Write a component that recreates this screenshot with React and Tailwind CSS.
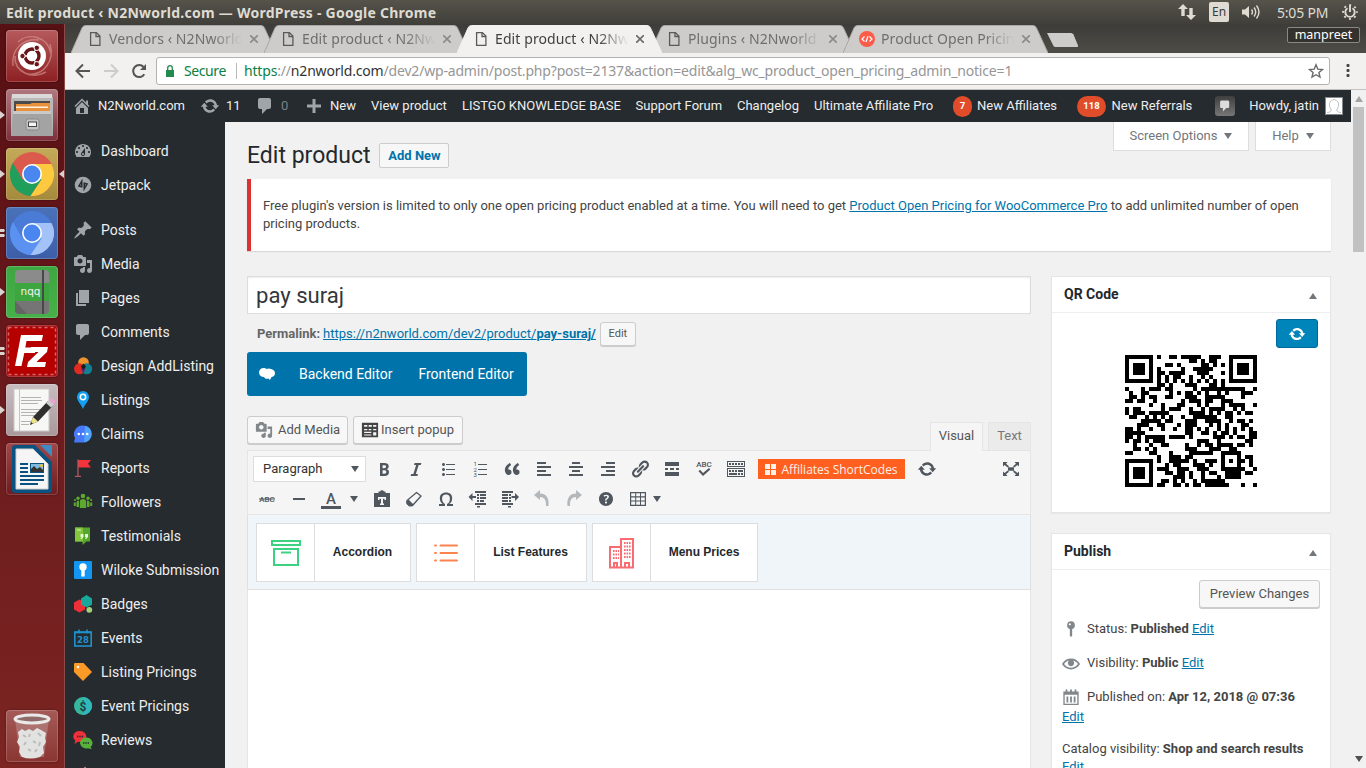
import React from "react";

/* ---------- QR code (version 4, 33 x 33 modules) ---------- */
function makeQr(text, { ecBits, mask, perBlock, blocks, ecLen }) {
  const n = 33;
  const exp = [];
  const log = [];
  for (let i = 0, x = 1; i < 255; i++) {
    exp[i] = x;
    log[x] = i;
    x <<= 1;
    if (x & 256) x ^= 0x11d;
  }
  const mul = (a, b) => (a && b ? exp[(log[a] + log[b]) % 255] : 0);
  const bits = [];
  const put = (v, len) => {
    for (let i = len - 1; i >= 0; i--) bits.push((v >> i) & 1);
  };
  put(4, 4);
  put(text.length, 8);
  for (const c of text) put(c.charCodeAt(0), 8);
  const cap = perBlock * blocks * 8;
  put(0, Math.min(4, cap - bits.length));
  while (bits.length % 8) bits.push(0);
  for (let p = 0; bits.length < cap; p++) put(p % 2 ? 0x11 : 0xec, 8);
  const bytes = [];
  for (let i = 0; i < bits.length; i += 8) bytes.push(parseInt(bits.slice(i, i + 8).join(""), 2));
  let gen = [1];
  for (let i = 0; i < ecLen; i++) {
    const next = new Array(gen.length + 1).fill(0);
    gen.forEach((g, j) => {
      next[j] ^= g;
      next[j + 1] ^= mul(g, exp[i]);
    });
    gen = next;
  }
  const data = [];
  const ecc = [];
  for (let b = 0; b < blocks; b++) {
    const d = bytes.slice(b * perBlock, (b + 1) * perBlock);
    const r = d.concat(new Array(ecLen).fill(0));
    for (let i = 0; i < d.length; i++) {
      const k = r[i];
      gen.forEach((g, j) => {
        r[i + j] ^= mul(g, k);
      });
    }
    data.push(d);
    ecc.push(r.slice(d.length));
  }
  const out = [];
  for (let i = 0; i < perBlock; i++) data.forEach((d) => out.push(d[i]));
  for (let i = 0; i < ecLen; i++) ecc.forEach((d) => out.push(d[i]));
  const m = Array.from({ length: n }, () => new Array(n).fill(null));
  const finder = (r, c) => {
    for (let y = -1; y < 8; y++)
      for (let x = -1; x < 8; x++) {
        if (!m[r + y] || m[r + y][c + x] === undefined) continue;
        const d = Math.max(Math.abs(y - 3), Math.abs(x - 3));
        m[r + y][c + x] = d !== 2 && d !== 4 ? 1 : 0;
      }
  };
  finder(0, 0);
  finder(0, n - 7);
  finder(n - 7, 0);
  for (let y = -2; y <= 2; y++)
    for (let x = -2; x <= 2; x++) m[26 + y][26 + x] = Math.max(Math.abs(y), Math.abs(x)) !== 1 ? 1 : 0;
  for (let i = 8; i < n - 8; i++) m[6][i] = m[i][6] = i % 2 ? 0 : 1;
  const fd = (ecBits << 3) | mask;
  let rem = fd;
  for (let i = 0; i < 10; i++) rem = (rem << 1) ^ ((rem >> 9) * 0x537);
  const f = ((fd << 10) | rem) ^ 0x5412;
  const g = (i) => (f >> i) & 1;
  for (let i = 0; i < 6; i++) m[i][8] = g(i);
  m[7][8] = g(6);
  m[8][8] = g(7);
  m[8][7] = g(8);
  for (let i = 9; i < 15; i++) m[8][14 - i] = g(i);
  for (let i = 0; i < 8; i++) m[8][n - 1 - i] = g(i);
  for (let i = 8; i < 15; i++) m[n - 15 + i][8] = g(i);
  m[n - 8][8] = 1;
  const masks = [
    (r, c) => (r + c) % 2,
    (r) => r % 2,
    (r, c) => c % 3,
    (r, c) => (r + c) % 3,
    (r, c) => (Math.floor(r / 2) + Math.floor(c / 3)) % 2,
    (r, c) => ((r * c) % 2) + ((r * c) % 3),
    (r, c) => (((r * c) % 2) + ((r * c) % 3)) % 2,
    (r, c) => (((r + c) % 2) + ((r * c) % 3)) % 2,
  ];
  let k = 0;
  for (let right = n - 1; right >= 1; right -= 2) {
    if (right === 6) right = 5;
    for (let v = 0; v < n; v++)
      for (let j = 0; j < 2; j++) {
        const x = right - j;
        const y = ((right + 1) & 2) === 0 ? n - 1 - v : v;
        if (m[y][x] === null) {
          const bit = k < out.length * 8 ? (out[k >> 3] >> (7 - (k & 7))) & 1 : 0;
          k++;
          m[y][x] = bit ^ (masks[mask](y, x) === 0 ? 1 : 0);
        }
      }
  }
  return m;
}

function QrCode() {
  const m = makeQr("https://n2nworld.com/dev2/product/pay-suraj/", {
    ecBits: 0,
    mask: 4,
    perBlock: 32,
    blocks: 2,
    ecLen: 18,
  });
  const d = m.map((row, y) => row.map((v, x) => (v ? `M${x} ${y}h1v1h-1z` : "")).join("")).join("");
  return (
    <svg viewBox="0 0 33 33" className="h-[132px] w-[132px]" shapeRendering="crispEdges">
      <path d={d} fill="#000" />
    </svg>
  );
}

/* ---------- icon glyphs on a 20 x 20 grid ---------- */
const P = {
  home: "M16 8.5l1.53 1.53-1.06 1.06L10 4.6l-6.47 6.49-1.06-1.06L10 2.5l4 4v-2h2v4zm-6-2.46l6 5.99V18H4v-5.97zM12 17v-5H8v5h4z",
  update:
    "M10.2 3.28c3.53 0 6.43 2.61 6.92 6h2.08l-3.5 4-3.5-4h2.32c-.45-1.97-2.21-3.45-4.32-3.45-1.45 0-2.73.71-3.54 1.78L4.95 5.66C6.23 4.2 8.11 3.28 10.2 3.28zm-.4 13.44c-3.52 0-6.43-2.61-6.92-6H.8l3.5-4c1.17 1.33 2.33 2.67 3.5 4H5.48c.45 1.97 2.21 3.45 4.32 3.45 1.45 0 2.73-.71 3.54-1.78l1.71 1.95c-1.28 1.46-3.15 2.38-5.25 2.38z",
  comment: "M5 2h9c1.1 0 2 .9 2 2v7c0 1.1-.9 2-2 2h-2l-5 5v-5H5c-1.1 0-2-.9-2-2V4c0-1.1.9-2 2-2z",
  plus: "M17 8.5v3h-5.500v5.500h-3v-5.500H3v-3h5.500V3h3v5.500z",
  dashboard:
    "M3.76 16h12.48c1.1-1.37 1.76-3.11 1.76-5 0-4.42-3.58-8-8-8s-8 3.58-8 8c0 1.89.66 3.63 1.76 5zM10 4c.55 0 1 .45 1 1s-.45 1-1 1-1-.45-1-1 .45-1 1-1zM6 6c.55 0 1 .45 1 1s-.45 1-1 1-1-.45-1-1 .45-1 1-1zm8 0c.55 0 1 .45 1 1s-.45 1-1 1-1-.45-1-1 .45-1 1-1zm-5.37 5.55L12 7v6c0 1.1-.9 2-2 2s-2-.9-2-2c0-.57.24-1.08.63-1.45zM4 10c.55 0 1 .45 1 1s-.45 1-1 1-1-.45-1-1 .45-1 1-1zm12 0c.55 0 1 .45 1 1s-.45 1-1 1-1-.45-1-1 .45-1 1-1zm-5 3c0-.55-.45-1-1-1s-1 .45-1 1 .45 1 1 1 1-.45 1-1z",
  post: "M10.44 3.02l1.82-1.82 6.36 6.35-1.83 1.82c-1.05-.68-2.48-.57-3.41.36l-.75.75c-.92.93-1.04 2.35-.35 3.41l-1.83 1.82-2.41-2.41-2.8 2.79c-.42.42-3.38 2.71-3.8 2.29s1.86-3.39 2.28-3.81l2.79-2.79L4.1 9.36l1.83-1.82c1.05.69 2.48.57 3.4-.36l.75-.75c.93-.92 1.05-2.35.36-3.41z",
  media:
    "M13 11V4c0-.55-.45-1-1-1h-1.670L9 1H5L3.670 3H2c-.55 0-1 .45-1 1v7c0 .55.45 1 1 1h10c.55 0 1-.45 1-1zM7 4.500c1.380 0 2.500 1.120 2.500 2.500S8.380 9.500 7 9.500 4.500 8.380 4.500 7 5.620 4.500 7 4.500zM14 6h5v10.500c0 1.380-1.120 2.500-2.500 2.500S14 17.880 14 16.500s1.120-2.500 2.500-2.500c.17 0 .34.02.5.05V9h-3V6zm-4 8.050V13h2v3.500c0 1.380-1.120 2.500-2.500 2.500S7 17.880 7 16.500 8.120 14 9.500 14c.17 0 .34.02.5.05z",
  page: "M6 15V2h10v13H6zm-1 1h8v2H3V5h2v11z",
  bold: "M6 4v13h4.540c1.370 0 2.460-.33 3.260-1 .8-.66 1.200-1.580 1.200-2.770 0-.84-.17-1.510-.51-2.010s-.9-.85-1.670-1.030v-.09c.57-.1 1.020-.4 1.360-.9s.51-1.130.51-1.910c0-1.140-.39-1.980-1.170-2.500C12.750 4.260 11.500 4 9.780 4H6zm2.570 5.150V6.260h1.360c.73 0 1.270.11 1.610.32.34.22.51.58.51 1.070 0 .54-.16.92-.47 1.150s-.82.35-1.510.35h-1.500zm0 2.190h1.600c1.440 0 2.160.53 2.160 1.610 0 .6-.17 1.050-.51 1.340s-.86.43-1.570.43H8.570v-3.380z",
  italic: "M14.78 6h-2.13l-2.8 9h2.12l-.62 2H4.6l.62-2h2.14l2.8-9H8.03l.62-2h6.75z",
  ul: "M5.500 7C4.670 7 4 6.330 4 5.500 4 4.680 4.670 4 5.500 4 6.320 4 7 4.680 7 5.500 7 6.330 6.320 7 5.500 7zM8 5h9v1H8V5zm-2.500 7c-.83 0-1.500-.67-1.500-1.500C4 9.680 4.670 9 5.500 9c.82 0 1.500.68 1.500 1.500 0 .83-.68 1.500-1.500 1.500zM8 10h9v1H8v-1zm-2.500 7c-.83 0-1.500-.67-1.500-1.500 0-.82.67-1.500 1.500-1.500.82 0 1.500.68 1.500 1.500 0 .83-.68 1.500-1.500 1.500zM8 15h9v1H8v-1z",
  quote:
    "M9.49 13.22c0-.74-.2-1.38-.61-1.9-.62-.78-1.83-.88-2.53-.72-.29-1.65 1.11-3.75 2.92-4.65L7.88 4c-2.73 1.3-5.42 4.28-4.96 8.05C3.21 14.43 4.59 16 6.54 16c.85 0 1.56-.25 2.12-.75s.83-1.18.83-2.03zm8.05 0c0-.74-.2-1.38-.61-1.9-.63-.78-1.83-.88-2.53-.72-.29-1.65 1.11-3.75 2.92-4.65L15.93 4c-2.73 1.3-5.41 4.28-4.95 8.05.29 2.38 1.66 3.95 3.61 3.95.85 0 1.56-.25 2.12-.75s.83-1.18.83-2.03z",
  left: "M12 5V3H3v2h9zm5 4V7H3v2h14zm-5 4v-2H3v2h9zm5 4v-2H3v2h14z",
  center: "M14 5V3H6v2h8zm3 4V7H3v2h14zm-3 4v-2H6v2h8zm3 4v-2H3v2h14z",
  right: "M17 5V3H8v2h9zm0 4V7H3v2h14zm0 4v-2H8v2h9zm0 4v-2H3v2h14z",
  link: "M17.74 2.76c1.68 1.69 1.68 4.41 0 6.1l-1.53 1.52c-1.12 1.12-2.7 1.47-4.14 1.09l2.62-2.61.76-.77.76-.76c.84-.84.84-2.2 0-3.04-.84-.85-2.2-.85-3.04 0l-.77.76-3.38 3.38c-.37-1.44-.02-3.02 1.1-4.14l1.52-1.53c1.69-1.68 4.42-1.68 6.1 0zM8.59 13.43l5.34-5.34c.42-.42.42-1.1 0-1.52-.44-.43-1.13-.39-1.53 0l-5.33 5.34c-.42.42-.42 1.1 0 1.52.44.43 1.13.39 1.52 0zm-.76 2.29l4.14-4.15c.38 1.44.03 3.02-1.09 4.14l-1.52 1.53c-1.69 1.68-4.41 1.68-6.1 0-1.68-1.68-1.68-4.42 0-6.1l1.53-1.52c1.12-1.12 2.7-1.47 4.14-1.1l-4.14 4.15c-.85.84-.85 2.2 0 3.05.84.84 2.2.84 3.04 0z",
  more: "M17 7V3H3v4h14zM6 11V9H3v2h3zm6 0V9H8v2h4zm5 0V9h-3v2h3zm0 6v-4H3v4h14z",
  sink: "M19 2v6H1V2h18zm-1 5V3H2v4h16zM5 4v2H3V4h2zm3 0v2H6V4h2zm3 0v2H9V4h2zm3 0v2h-2V4h2zm3 0v2h-2V4h2zm2 5v9H1V9h18zm-1 8v-7H2v7h16zM5 11v2H3v-2h2zm3 0v2H6v-2h2zm3 0v2H9v-2h2zm6 0v2h-5v-2h5zm-6 3v2H3v-2h8zm3 0v2h-2v-2h2zm3 0v2h-2v-2h2z",
  full: "M2 3h4.500L5 4.700l3 2.500-1.300 1.300-3.100-2.600L2 7.500zM18 3v4.500l-1.600-1.600-3.100 2.600L12 7.200l3-2.500L13.500 3zM2 17v-4.500l1.600 1.600 3.100-2.600L8 12.800l-3 2.500L6.500 17zM18 17h-4.500l1.500-1.700-3-2.500 1.300-1.300 3.100 2.600 1.600-1.600zM7 8.200h6v3.600H7z",
  omega:
    "M10 5.4c1.27 0 2.24.36 2.91 1.08.66.71 1 1.76 1 3.13 0 1.28-.23 2.37-.69 3.27-.47.89-1.27 1.52-2.22 2.12v2h6v-2h-3.69c.92-.64 1.62-1.34 2.12-2.34.49-1.01.74-2.13.74-3.35 0-1.78-.55-3.19-1.65-4.22S11.92 3.54 10 3.54s-3.43.53-4.52 1.57c-1.1 1.04-1.65 2.44-1.65 4.2 0 1.21.24 2.31.73 3.33.48 1.01 1.19 1.71 2.1 2.36H3v2h6v-2c-.98-.64-1.8-1.28-2.24-2.17-.45-.89-.67-1.96-.67-3.22 0-1.37.33-2.41 1-3.13C7.75 5.76 8.72 5.4 10 5.4z",
  help: "M17 10c0-3.870-3.140-7-7-7-3.870 0-7 3.130-7 7s3.130 7 7 7c3.860 0 7-3.130 7-7zm-6.300 1.480H9.140v-.43c0-.38.08-.7.24-.98s.46-.57.88-.89c.41-.29.68-.53.81-.71.14-.18.2-.39.2-.62 0-.25-.09-.44-.28-.58-.19-.13-.45-.19-.79-.19-.58 0-1.250.19-2 .57l-.64-1.280c.87-.49 1.800-.74 2.770-.74.81 0 1.450.2 1.920.58.48.39.71.91.71 1.550 0 .43-.09.8-.29 1.110-.19.32-.57.67-1.110 1.060-.38.28-.61.49-.71.63-.1.15-.15.34-.15.57v.35zm-1.470 2.740c-.18-.17-.27-.42-.27-.73 0-.33.08-.58.26-.75s.43-.25.77-.25c.32 0 .57.09.75.26s.27.42.27.74c0 .3-.09.55-.27.72-.18.18-.43.27-.75.27-.33 0-.58-.09-.76-.26z",
  indentOut:
    "M7 2h11v2H7zM9 5h2v2H9zM12 5h6v2h-6zM9 8h2v2H9zM12 8h6v2h-6zM9 11h2v2H9zM12 11h4v2h-4zM7 14h11v2H7zM9 17h3v1.500H9zM.5 8l4-4v3H8v2H4.500v3z",
  indentIn:
    "M2 2h11v2H2zM2 5h6v2H2zM9 5h2v2H9zM2 8h6v2H2zM9 8h2v2H9zM2 11h6v2H2zM9 11h2v2H9zM2 14h11v2H2zM8 17h3v1.500H8zM19 8l-4-4v3h-3.500v2H15v3z",
  table: "M2 3h16v14H2zM3.200 4.200v3h4v-3zM8.200 4.200v3h3.800v-3zM13 4.200v3h3.800v-3zM3.200 8.400v3h4v-3zM8.200 8.400v3h3.800v-3zM13 8.400v3h3.800v-3zM3.200 12.600v3.200h4v-3.200zM8.200 12.600v3.200h3.800v-3.200zM13 12.600v3.200h3.800v-3.200z",
  popup:
    "M1 2h18v16H1zM3.500 4.500v1.800h3.500V4.500zM8.500 4.500v1.800H12V4.500zM13.500 4.500v1.800H17V4.500zM3.500 9v1.200H7V9zM8.500 9v1.200h3V9zM3.500 12v1.200h8V12zM3.500 15v1.200h8V15zM13.500 9v1.200H17V9zM13.500 12.500v3.500H17v-3.500z",
  eye: "M19.700 9.400C17.700 6 14 3.900 10 3.900S2.300 6 .3 9.400L0 10l.3.6c2 3.400 5.700 5.500 9.700 5.500s7.700-2.100 9.700-5.500l.3-.6-.3-.6zM10 14.100c-3.100 0-6-1.600-7.700-4.100C3.600 8 5.700 6.600 8 6.100c-.9.6-1.500 1.700-1.500 2.900 0 1.900 1.600 3.500 3.500 3.500s3.500-1.600 3.500-3.500c0-1.200-.6-2.300-1.500-2.900 2.300.5 4.400 1.900 5.700 3.900-1.700 2.500-4.600 4.100-7.700 4.100z",
  pin: "M10 1.500a4.300 4.300 0 0 1 1.300 8.400V17.500L10 19l-1.300-1.500V9.900A4.300 4.300 0 0 1 10 1.500zM8.700 3.500a1.200 1.200 0 1 0 .01 0z",
  calendar:
    "M1.500 4H4V2.500a1 1 0 0 1 2 0V4h3V2.500a1 1 0 0 1 2 0V4h3V2.500a1 1 0 0 1 2 0V4h2.500v15h-17zM3 7.500v10h14v-10zM5 9.500h2v6.500H5zM9 9.500h2v6.500H9zM13 9.500h2v6.500h-2z",
};

function Dash({ d, className = "h-5 w-5", children }) {
  return (
    <svg viewBox="0 0 20 20" className={`shrink-0 ${className}`} fill="currentColor" fillRule="evenodd">
      {d ? <path d={d} /> : children}
    </svg>
  );
}

const Caret = ({ up, className = "" }) => (
  <svg viewBox="0 0 8 6" className={`h-1.5 w-2 shrink-0 ${className}`} fill="currentColor">
    <path d={up ? "M0 6L4 0L8 6z" : "M0 0h8L4 6z"} />
  </svg>
);

/* ---------- desktop panel ---------- */
function TopPanel() {
  return (
    <header className="flex h-6 items-center bg-linear-to-b from-[#55534a] to-[#403f3a] pl-1.5 pr-2 font-['Noto_Sans',sans-serif] text-[#dfdbd2]">
      <span className="whitespace-nowrap text-[14px] font-bold tracking-[0.25px]">Edit product ‹ N2Nworld.com — WordPress - Google Chrome</span>
      <svg viewBox="0 0 18 16" className="ml-auto h-4 w-[18px]" fill="currentColor">
        <path d="M5 0L0 5h3.300v7h3.400V5H10zM13 16l-5-5h3.300V4h3.400v7H18z" />
      </svg>
      <span className="ml-[13px] flex h-5 w-5 items-center justify-center rounded-[2px] bg-[#dfdbd2] text-[12px] text-[#3c3b37]">En</span>
      <svg viewBox="0 0 20 16" className="ml-3 h-4 w-5" fill="none" stroke="currentColor" strokeWidth="1.400">
        <path d="M1 5.500h3L8 2v12L4 10.500H1z" fill="currentColor" stroke="none" />
        <path d="M10.500 5.500q2 2.500 0 5M13 3.500q3.500 4.500 0 9M15.500 1.500q5 6.500 0 13" />
      </svg>
      <span className="ml-4 w-[52px] whitespace-nowrap text-[14px] tracking-[-0.2px]">5:05 PM</span>
      <svg viewBox="0 0 16 16" className="ml-[13px] h-4 w-4" fill="none" stroke="currentColor">
        <circle cx="8" cy="8" r="6.900" strokeWidth="1.800" strokeDasharray="2 3.420" strokeDashoffset="1" />
        <path d="M5.500 4.200a4.700 4.700 0 1 0 5 0" strokeWidth="1.900" />
        <path d="M8 1v7" strokeWidth="1.900" />
      </svg>
    </header>
  );
}

/* ---------- launcher ---------- */
function Tile({ className, children, running, focused }) {
  return (
    <div className="flex h-[52px] w-full items-center">
      <span className="flex w-1.5 justify-start text-[#d9d3cf]">
        {running === 1 && (
          <svg viewBox="0 0 5 8" className="h-2 w-[5px]" fill="currentColor">
            <path d="M0 0l5 4-5 4z" />
          </svg>
        )}
        {running === 2 && (
          <svg viewBox="0 0 5 8" className="h-2 w-[5px]" fill="currentColor">
            <path d="M0 0h4l1 1.500L4 3H0zM0 5h4l1 1.500L4 8H0z" />
          </svg>
        )}
      </span>
      <span
        className={`flex h-[52px] w-[52px] items-center justify-center overflow-hidden rounded-[4px] shadow-[inset_0_0_0_1px_rgba(255,255,255,0.18),0_0_2px_rgba(0,0,0,0.5)] ${className}`}
      >
        {children}
      </span>
      <span className="flex flex-1 justify-end text-[#d9d3cf]">
        {focused && (
          <svg viewBox="0 0 5 8" className="h-2 w-[5px]" fill="currentColor">
            <path d="M5 0L0 4l5 4z" />
          </svg>
        )}
      </span>
    </div>
  );
}

function ChromeLogo({ a, b, c }) {
  return (
    <svg viewBox="0 0 44 44" className="h-11 w-11">
      <circle cx="22" cy="22" r="22" fill={a} />
      <path d="M2.950 11A22 22 0 0 0 20.500 44L31.500 27.500 22 22 12.500 27.500z" fill={b} />
      <path d="M41.500 12A22 22 0 0 1 20.500 44L31.500 27.500 22 22V12z" fill={c} />
      <circle cx="22" cy="22" r="10" fill="#fff" />
      <circle cx="22" cy="22" r="8.400" fill="#4a86ef" />
    </svg>
  );
}

function Launcher() {
  return (
    <aside className="flex w-[65px] shrink-0 flex-col gap-[7px] border-r border-[#8b4a48] bg-linear-to-b from-[#571013] via-[#6b1a1d] to-[#7c2522] pb-1.5 pt-1.5">
      <Tile className="bg-linear-to-b from-[#b55a5d] to-[#8d1f22]">
        <svg viewBox="0 0 52 52" className="h-[52px] w-[52px]" fill="none">
          <path d="M7 36C5 18 18 8 33 10M44 14c5 16-6 32-22 30M12 12C22 2 42 6 45 24M40 42C26 50 8 42 9 26" stroke="#d99" strokeWidth="1.500" opacity=".6" />
          <circle cx="26" cy="26" r="14" fill="#fff" />
          <circle cx="26" cy="26" r="7" stroke="#6b1518" strokeWidth="3.400" />
          <path d="M26 26L16 26M26 26l5-9M26 26l5 9" stroke="#fff" strokeWidth="1.300" />
          <circle cx="26" cy="26" r="4.800" fill="#fff" />
          <g fill="#6b1518" stroke="#fff" strokeWidth="1">
            <circle cx="16.500" cy="26" r="2.700" />
            <circle cx="30.800" cy="17.800" r="2.700" />
            <circle cx="30.800" cy="34.200" r="2.700" />
          </g>
        </svg>
      </Tile>
      <Tile running={1} className="bg-linear-to-b from-[#b07880] to-[#7c2e3a]">
        <svg viewBox="0 0 52 52" className="h-[52px] w-[52px]">
          <path d="M6 5h40l1 10H5z" fill="#dadada" />
          <rect x="5" y="9" width="42" height="38" fill="#b9b9b9" />
          <rect x="8" y="12" width="36" height="14" fill="#4b4b4b" />
          <path d="M10 15h14l2-1h18v8H10z" fill="#e8913a" />
          <path d="M10 17.500h32v1.500H10z" fill="#fff3df" />
          <path d="M7 22h38l2 25H5z" fill="#a3a3a3" />
          <path d="M7 22h38v3H7z" fill="#c9c9c9" />
          <rect x="20" y="30" width="13" height="11" rx="2" fill="#c4c4c4" stroke="#888" />
          <rect x="22.500" y="33" width="8" height="4.500" fill="#f6f6f6" stroke="#444" />
        </svg>
      </Tile>
      <Tile running={1} focused className="bg-linear-to-b from-[#c4aa58] to-[#a58a3c]">
        <ChromeLogo a="#db5a4c" b="#1f9f5b" c="#fcc93f" />
      </Tile>
      <Tile running={2} className="bg-linear-to-b from-[#4a72b8] to-[#3c5ea8]">
        <ChromeLogo a="#4a7bd6" b="#5b92f2" c="#a3c2f8" />
      </Tile>
      <Tile running={1} className="bg-linear-to-b from-[#3fa742] to-[#46b049]">
        <svg viewBox="0 0 52 52" className="h-[52px] w-[52px]">
          <rect x="9" y="4" width="34" height="44" rx="4" fill="#8b8b8b" />
          <rect x="9" y="17" width="34" height="18" fill="#3da63f" />
          <path d="M9 35h34v9q0 4-4 4H20z" fill="#757575" />
          <path d="M9 35l12 13h-8q-4 0-4-4z" fill="#646464" />
          <path d="M37 4v44" stroke="#464a46" strokeWidth="2" />
          <text x="24.500" y="29" textAnchor="middle" fontSize="10.500" fill="#f2f2f2" fontFamily="DejaVu Sans, sans-serif">
            nqq
          </text>
        </svg>
      </Tile>
      <Tile running={2} className="bg-[#a80d10]">
        <svg viewBox="0 0 52 52" className="h-[52px] w-[52px]">
          <rect x="2.500" y="2.500" width="47" height="47" fill="#b60000" stroke="#d26a6a" strokeWidth="1.500" strokeDasharray="3 3" />
          <path d="M15 10h22l-1.200 6H20.500l-1.200 6.500H30l-1 5.500H18.300L15.500 41H9z" fill="#fff" />
          <path d="M25 22h17l-1 5-10.500 10H40l-1 5H21l1-5 10.500-10H24z" fill="#fff" />
        </svg>
      </Tile>
      <Tile running={1} className="bg-linear-to-b from-[#c9bcc0] to-[#a8989c]">
        <svg viewBox="0 0 52 52" className="h-[52px] w-[52px]">
          <rect x="8" y="5" width="35" height="42" fill="#f7f7f5" stroke="#c9c9c9" />
          <path d="M13.500 5v42" stroke="#f2b0b0" />
          <path d="M15 13.500h20M15 16.500h21M15 19.500h17M15 25.500h21M15 28.500h18M15 31.500h20M15 37.500h15M15 40.500h8" stroke="#aaa" strokeWidth=".9" />
          <path d="M24 41l3-8 15-16 5 4.500-15 16z" fill="#2f2f2f" />
          <path d="M24 41l3-8 5 4.500z" fill="#efe38a" />
          <path d="M24 41l1-3 2 1.500z" fill="#333" />
          <path d="M40 19l3-3 5 4.500-3 3z" fill="#ccc" />
          <path d="M43 16l2-2q4 0 4.500 4.500l-2 2z" fill="#e7a6cf" />
        </svg>
      </Tile>
      <Tile className="bg-linear-to-b from-[#a0484a] to-[#6d1b1e]">
        <svg viewBox="0 0 52 52" className="h-[52px] w-[52px]">
          <path d="M9 2h20l17 17v28q0 3-3 3H9q-3 0-3-3V5q0-3 3-3z" fill="#0a527f" />
          <path d="M34 2h12v12z" fill="#3d8bc0" />
          <path d="M10 6h17l15 15v25H10z" fill="#f5f5f5" stroke="#cfcfcf" />
          <path d="M14 21h8M14 25h8M14 29h8M14 33h24M14 37h24M14 41h18" stroke="#0a527f" strokeWidth="2" />
          <rect x="24.500" y="20.500" width="13" height="9" fill="#7fb9dd" stroke="#0a527f" />
          <path d="M25 29v-3l3-3 3 3 3-2 3 3v2z" fill="#333" />
          <circle cx="35.500" cy="22.500" r="1.500" fill="#f2c12e" />
        </svg>
      </Tile>
      <div className="mt-auto">
        <Tile className="bg-linear-to-b from-[#a55a57] to-[#8a3532]">
          <svg viewBox="0 0 52 52" className="h-[52px] w-[52px]">
            <path d="M9 9h34l-5 38H14z" fill="#b98a88" opacity=".6" />
            <path d="M12 22l4-3 3 2 4-2 4 2 4-3 4 2 5 3-1 5 1 4-3 5 1 6-4 4q-10 3-18 0l-3-5 1-5-3-5 2-5z" fill="#e2e2e0" />
            <path d="M17 25l3 2M24 24l-1 3M32 23l3 3M20 32l-2 3M27 31l3 2M34 32l-1 4M22 39l3 2M31 39l-2 3" stroke="#bcbcba" strokeWidth="2" fill="none" />
            <ellipse cx="26" cy="9" rx="17" ry="4" fill="#8e6a69" stroke="#e9e9e9" strokeWidth="3" />
          </svg>
        </Tile>
      </div>
    </aside>
  );
}

/* ---------- browser chrome ---------- */
function Tab({ title, active, code, first }) {
  return (
    <div className={`relative flex h-[28px] w-[205px] shrink-0 items-center pl-4 pr-[18px] ${first ? "" : "-ml-3"} ${active ? "z-10" : ""}`}>
      <svg viewBox="0 0 205 28" className="absolute inset-0 h-7 w-[205px]">
        <path d="M0 28L11 3Q12 .5 14.500 .5H190Q192.500 .5 193.500 3L205 28z" fill={active ? "#f2f1ef" : "#cdccca"} />
        <path d="M0 28L11 3Q12 .5 14.500 .5H190Q192.500 .5 193.500 3L205 28" fill="none" stroke={active ? "#f2f1ef" : "#a9a8a5"} strokeWidth="1" />
      </svg>
      {code ? (
        <svg viewBox="0 0 16 16" className="relative h-4 w-4 shrink-0">
          <circle cx="8" cy="8" r="8" fill="#fb5b48" />
          <path d="M5.500 5.500L3 8l2.500 2.500M10.500 5.500L13 8l-2.500 2.500M9 5l-2 6" stroke="#fff" strokeWidth="1.200" fill="none" />
        </svg>
      ) : (
        <svg viewBox="0 0 16 16" className="relative h-4 w-4 shrink-0" fill="none" stroke="#5a5a5a" strokeWidth="1.300">
          <path d="M3.600 1.600h5.800l3.500 3.500v9.300H3.600zM9 1.800v3.700h3.700" />
        </svg>
      )}
      <span
        className={`relative ml-1.5 w-[133px] overflow-hidden whitespace-nowrap font-['Noto_Sans',sans-serif] text-[14px] leading-5 tracking-[0.1px] [mask-image:linear-gradient(to_right,black_78%,transparent)] ${
          active ? "text-[#3f3f3f]" : "text-[#6f6e6b]"
        }`}
      >
        {title}
      </span>
      <svg viewBox="0 0 8 8" className="relative ml-auto h-2 w-2 shrink-0" stroke={active ? "#6c6c6a" : "#8b8a87"} strokeWidth="1.600">
        <path d="M0 0l8 8M8 0L0 8" />
      </svg>
    </div>
  );
}

function BrowserChrome() {
  return (
    <div className="h-[66px] shrink-0 font-['Noto_Sans',sans-serif]">
      <div className="flex h-[29px] items-end bg-linear-to-b from-[#3d3c38] to-[#4d4c46] pl-1.5">
        <Tab first title="Vendors ‹ N2Nworld" />
        <Tab title="Edit product ‹ N2Nw" />
        <Tab active title="Edit product ‹ N2Nw" />
        <Tab title="Plugins ‹ N2Nworld" />
        <Tab code title="Product Open Pricin" />
        <svg viewBox="0 0 33 16" className="-ml-0.5 mb-[5px] h-4 w-[33px]">
          <path d="M1 1h24q1.500 0 2.500 1.500L32 13.500q.5 1.500-1 1.500H9.500Q8 15 7.500 14z" fill="#cdccca" />
        </svg>
        <span className="ml-auto mr-1.5 mt-[3px] flex h-4 w-[73px] items-center justify-center self-start rounded-[2px] border border-[#8a8984] bg-[#33322f] text-[12.500px] leading-none text-white">
          manpreet
        </span>
      </div>
      <div className="flex h-[37px] items-center border-b border-[#c2c1bf] bg-[#f2f1ef] pl-2.5 pr-4">
        <svg viewBox="0 0 16 16" className="h-4 w-4" fill="none" stroke="#555" strokeWidth="2">
          <path d="M15 8H2M8 1.500L1.500 8 8 14.500" />
        </svg>
        <svg viewBox="0 0 16 16" className="ml-3 h-4 w-4" fill="none" stroke="#ccc" strokeWidth="2">
          <path d="M1 8h13M8 1.500L14.500 8 8 14.500" />
        </svg>
        <svg viewBox="0 0 16 16" className="ml-3 h-4 w-4" fill="none" stroke="#555" strokeWidth="2">
          <path d="M13.300 11.200A6 6 0 1 1 12.600 4" />
          <path d="M15 1v6H9z" fill="#555" stroke="none" />
        </svg>
        <div className="ml-[9px] flex h-7 flex-1 items-center rounded-[3px] border border-[#b3b2b0] bg-white pl-[9px] pr-[5px] text-[14px]">
          <svg viewBox="0 0 8 12" className="h-3 w-2">
            <path d="M0 5h8v7H0z" fill="#218a4c" />
            <path d="M1.700 5V3a2.300 2.300 0 0 1 4.600 0v2" fill="none" stroke="#218a4c" strokeWidth="1.300" />
          </svg>
          <span className="ml-[10px] w-[43px] whitespace-nowrap pb-0.5 text-[14px] tracking-[-0.4px] text-[#0b8043]">Secure</span>
          <span className="ml-[9px] h-4 w-px bg-[#b9b9b9]" />
          <span className="ml-[7px] whitespace-nowrap pb-0.5 tracking-[-0.18px] text-[#969696]">
            <span className="text-[#0b8043]">https</span>://<span className="text-[#333]">n2nworld.com</span>
            /dev2/wp-admin/post.php?post=2137&amp;action=edit&amp;alg_wc_product_open_pricing_admin_notice=1
          </span>
          <svg viewBox="0 0 16 16" className="ml-auto h-4 w-4 shrink-0" fill="none" stroke="#6b6b6b" strokeWidth="1.400">
            <path d="M8 1.800l1.800 4.300 4.700.4-3.600 3 1.100 4.600L8 11.700l-4 2.400 1.100-4.600-3.600-3 4.700-.4z" />
          </svg>
        </div>
        <svg viewBox="0 0 4 14" className="ml-4 h-3.5 w-1" fill="#444">
          <rect x=".5" y="0" width="3" height="3" rx="1" />
          <rect x=".5" y="5" width="3" height="3" rx="1" />
          <rect x=".5" y="10" width="3" height="3" rx="1" />
        </svg>
      </div>
    </div>
  );
}

/* ---------- WordPress ---------- */
function AdminBar() {
  return (
    <div className="flex h-8 shrink-0 items-center whitespace-nowrap bg-[#262b2f] pl-[7px] pr-2 text-[13px] text-[#eee]">
      <Dash d={P.home} className="h-5 w-5 text-[#a0a5aa]" />
      <span className="ml-[6px] w-[87px]">N2Nworld.com</span>
      <Dash d={P.update} className="ml-[15px] h-5 w-5 text-[#a0a5aa]" />
      <span className="ml-1.5 w-[14px]">11</span>
      <Dash d={P.comment} className="ml-[15px] h-[20px] w-5 text-[#a0a5aa]" />
      <span className="ml-1.5 w-2 text-[#7c8186]">0</span>
      <Dash d={P.plus} className="ml-[15px] h-5 w-5 text-[#a0a5aa]" />
      <span className="ml-[6px] w-[26px]">New</span>
      <span className="ml-[15px] w-[76px]">View product</span>
      <span className="ml-[15px] w-[159px]">LISTGO KNOWLEDGE BASE</span>
      <span className="ml-[14.500px] w-[86px]">Support Forum</span>
      <span className="ml-[15.500px] w-[62px]">Changelog</span>
      <span className="ml-[15px] w-[119px]">Ultimate Affiliate Pro</span>
      <span className="ml-5 flex h-[21px] w-[19px] items-center justify-center rounded-full bg-[#e14d2a] text-[9.500px] font-bold leading-none text-white">7</span>
      <span className="ml-[5px] w-[80px]">New Affiliates</span>
      <span className="ml-5 flex h-[21px] w-[29px] items-center justify-center rounded-full bg-[#e14d2a] text-[9.500px] font-bold leading-none text-white">118</span>
      <span className="ml-[5.500px] w-[80.500px]">New Referrals</span>
      <span className="ml-[23px] flex h-5 w-5 items-center justify-center rounded-[3px] bg-linear-to-b from-[#3f3f3f] to-[#777]">
        <Dash d={P.comment} className="h-3.5 w-3.5 text-[#ddd]" />
      </span>
      <span className="ml-auto">Howdy, jatin</span>
      <svg viewBox="0 0 18 18" className="ml-1.5 h-[18px] w-[18px]">
        <rect width="18" height="18" fill="#82878c" />
        <rect x="1" y="1" width="16" height="16" fill="#fff" />
        <path d="M2 15.500q2 .5 4.500-2Q3.500 9 4.500 6 6 2.500 9 2.500T13.500 6q1 3-2 7.500 2.500 2.500 4.500 2" fill="none" stroke="#c3c3c3" />
      </svg>
    </div>
  );
}

const colorIcons = {
  jetpack: (
    <g>
      <circle cx="10" cy="10" r="8.300" fill="#a0a5aa" />
      <path d="M9.500 3.500v9.200L4.800 11.500zM10.500 16.500V7.300l4.700 1.200z" fill="#262b2f" />
      <path d="M8 9v1.700l-1-.2zM12 11V9.300l1 .2z" fill="#a0a5aa" />
    </g>
  ),
  design: (
    <g>
      <circle cx="10.500" cy="6.500" r="5.300" fill="#f0932b" />
      <circle cx="6.500" cy="12.800" r="5.500" fill="#e02b20" />
      <circle cx="13.700" cy="12.800" r="5.500" fill="#13808f" />
      <path d="M10.200 8.600a5.500 5.500 0 0 1 0 8.400 5.500 5.500 0 0 1 0-8.400z" fill="#5e2a7a" />
      <path d="M10.500 7.500l2.500 3-2.500 3.500L8 10.500z" fill="#1b1b1b" />
    </g>
  ),
  listing: (
    <g>
      <path d="M10 1a6 6 0 0 1 6 6c0 4-4 7-6 12C8 14 4 11 4 7a6 6 0 0 1 6-6z" fill="#12a0f2" />
      <circle cx="10" cy="7" r="2.700" fill="none" stroke="#fff" strokeWidth="1.500" />
    </g>
  ),
  claims: (
    <g>
      <path d="M10 1.500a8.500 8.500 0 1 1 0 17H1l1-4.500A8.500 8.500 0 0 1 10 1.500z" fill="#4778fa" />
      <path d="M12 1.700a8.500 8.500 0 0 1-1 16.800z" fill="#4fa3fb" />
      <g fill="#fff">
        <circle cx="5.800" cy="10" r="1.300" />
        <circle cx="10" cy="10" r="1.300" />
        <circle cx="14.200" cy="10" r="1.300" />
      </g>
    </g>
  ),
  flag: (
    <g>
      <path d="M5 2h13l-3 3.800 3 3.700H5z" fill="#f5333a" />
      <path d="M5 1.500V18M2 18.300h6" stroke="#b35660" strokeWidth="1.300" />
    </g>
  ),
  followers: (
    <g fill="#5fa82f">
      <circle cx="10" cy="4" r="2.300" />
      <path d="M6.800 16V10q0-3 3.200-3t3.200 3v6z" />
      <circle cx="5" cy="6.300" r="1.700" />
      <circle cx="15" cy="6.300" r="1.700" />
      <path d="M3.500 15V10q0-1.500 2.500-1.500V15zM16.500 15V10q0-1.500-2.500-1.500V15z" />
      <circle cx="1.900" cy="8" r="1.100" />
      <circle cx="18.100" cy="8" r="1.100" />
      <path d="M.8 14v-3.500h2V14zM17.200 14v-3.500h2V14z" />
    </g>
  ),
  testimonials: (
    <g>
      <path d="M2 1.500h15v14h-3.500L9.500 19v-3.500H2z" fill="#55a82c" />
      <path d="M2 1.500h8v14H2z" fill="#82c43c" />
      <path d="M4 4h4" stroke="#d9efc6" />
      <path d="M7.500 8h3v3l-2 2h-1l1-2h-1zM12 8h3v3l-2 2h-1l1-2h-1z" fill="#e6f5da" />
    </g>
  ),
  submission: (
    <g>
      <rect x="1" y="1" width="18" height="18" rx="1" fill="#1396f3" />
      <circle cx="10" cy="7" r="3.700" fill="#fff" />
      <path d="M8.300 9h3.400v7.500H8.300z" fill="#fff" />
    </g>
  ),
  badges: (
    <g>
      <path d="M1 8.500L6.500 5.500 12 8.500v7L6.500 18.500 1 15.500z" fill="#ef2f35" />
      <path d="M8 4.500L13.500 1 19 4.500v6.200L13.500 13.500 8 10.500z" fill="#17a79b" />
      <circle cx="16.300" cy="15.800" r="2.900" fill="#a6cf7a" />
    </g>
  ),
  events: (
    <g>
      <rect x="1.800" y="4" width="16.400" height="14" fill="none" stroke="#1d93cf" strokeWidth="1.600" />
      <path d="M6 1.500v4M14 1.500v4M2 4.500h16" stroke="#1d93cf" strokeWidth="1.600" />
      <text x="10" y="14.800" textAnchor="middle" fontSize="8.500" fontWeight="700" fill="#1d93cf" fontFamily="DejaVu Sans, sans-serif">
        28
      </text>
    </g>
  ),
  tag: (
    <g>
      <path d="M1.500 1h9L19 10l-9 9-9-9V1.500z" fill="#fb9a27" />
      <circle cx="5" cy="5" r="1.300" fill="#fff" />
    </g>
  ),
  dollar: (
    <g>
      <circle cx="10" cy="10" r="9" fill="#35b8a0" />
      <path d="M10 1a9 9 0 0 1 0 18z" fill="#2fb9bd" />
      <text x="10" y="14.500" textAnchor="middle" fontSize="12" fontWeight="700" fill="#1f3f4a" fontFamily="Roboto, sans-serif">
        $
      </text>
    </g>
  ),
  reviews: (
    <g>
      <path d="M7 1a6.300 5.500 0 1 1-2 10.700L1.500 14l.8-3.500A6.300 5.500 0 0 1 7 1z" fill="#ef2f3a" />
      <path d="M13 7.500a6.300 5.500 0 0 1 4.500 9.500l1.300 2.300-3.800-1A6.300 5.500 0 1 1 13 7.500z" fill="#57b13a" />
      <path d="M4 6.500h6M10 13h6" stroke="#262b2f" strokeWidth="1.400" strokeDasharray="1.400 .9" />
    </g>
  ),
  last: <path d="M12 2.500l2 2.500h-4z" fill="#d58f80" />,
};

const menu = [
  ["Dashboard", "dashboard"],
  ["Jetpack", "jetpack"],
  null,
  ["Posts", "post"],
  ["Media", "media"],
  ["Pages", "page"],
  ["Comments", "comment"],
  ["Design AddListing", "design"],
  ["Listings", "listing"],
  ["Claims", "claims"],
  ["Reports", "flag"],
  ["Followers", "followers"],
  ["Testimonials", "testimonials"],
  ["Wiloke Submission", "submission"],
  ["Badges", "badges"],
  ["Events", "events"],
  ["Listing Pricings", "tag"],
  ["Event Pricings", "dollar"],
  ["Reviews", "reviews"],
  ["", "last"],
];

function AdminMenu() {
  return (
    <nav className="w-40 shrink-0 overflow-hidden bg-[#262b2f] pt-3 text-[14px] text-[#eee]">
      {menu.map((it, i) =>
        it ? (
          <div key={i} className="flex h-[34px] items-center gap-2 whitespace-nowrap pl-2">
            {colorIcons[it[1]] ? <Dash>{colorIcons[it[1]]}</Dash> : <Dash d={P[it[1]]} className="h-5 w-5 text-[#a0a5aa]" />}
            <span>{it[0]}</span>
          </div>
        ) : (
          <div key={i} className="h-[11px]" />
        )
      )}
    </nav>
  );
}

const TB = ({ d, children, className = "" }) => (
  <span className={`flex h-[30px] w-8 shrink-0 items-center justify-center ${className}`}>
    <Dash d={d}>{children}</Dash>
  </span>
);

function EditorToolbar() {
  return (
    <div className="h-[65px] border border-[#e5e5e5] bg-[#f5f5f5] pt-[3px] text-[#50575e]">
      <div className="flex h-[30px] items-center pl-[5px] pr-[3px]">
        <span className="mr-0.5 flex h-[26px] w-[113px] items-center justify-between border border-[#ddd] bg-white pl-[9px] pr-1.5 text-[13px] text-[#333]">
          Paragraph
          <Caret className="text-[#50575e]" />
        </span>
        <TB d={P.bold} />
        <TB d={P.italic} />
        <TB d={P.ul} />
        <TB>
          <path d="M8 5h9v1H8zM8 10h9v1H8zM8 15h9v1H8z" />
          <text x="3.500" y="7" fontSize="6" fontFamily="Roboto, sans-serif">1</text>
          <text x="3.500" y="12.500" fontSize="6" fontFamily="Roboto, sans-serif">2</text>
          <text x="3.500" y="18" fontSize="6" fontFamily="Roboto, sans-serif">3</text>
        </TB>
        <TB d={P.quote} />
        <TB d={P.left} />
        <TB d={P.center} />
        <TB d={P.right} />
        <TB d={P.link} />
        <TB d={P.more} />
        <TB>
          <text x="10" y="7.500" textAnchor="middle" fontSize="8" fontWeight="500" fontFamily="Roboto, sans-serif">ABC</text>
          <path d="M4.500 12.200l1.500-1.400L9 14l6-5 1.300 1.400L9 17z" />
        </TB>
        <TB d={P.sink} />
        <span className="ml-1.5 flex h-5 w-[147px] items-center justify-center gap-[5px] whitespace-nowrap bg-[#ff5f1f] font-['Open_Sans',sans-serif] text-[12px] text-[#fdf1ea]">
          <svg viewBox="0 0 11 11" className="h-[11px] w-[11px]" fill="currentColor">
            <path d="M0 0h5v5H0zM6 0h5v5H6zM0 6h5v5H0zM6 6h5v5H6z" />
          </svg>
          <span className="pt-px">Affiliates ShortCodes</span>
        </span>
        <TB d={P.update} className="ml-1.5" />
        <TB d={P.full} className="ml-auto" />
      </div>
      <div className="flex h-[30px] items-center pl-[3px]">
        <TB>
          <text x="10" y="13" textAnchor="middle" fontSize="8" fontWeight="500" fontFamily="Roboto, sans-serif">ABC</text>
          <path d="M2 9.500h16v1H2z" />
        </TB>
        <TB>
          <path d="M4 9h12v2H4z" />
        </TB>
        <TB>
          <path d="M0 17h20v3H0z" />
          <text x="10" y="15" textAnchor="middle" fontSize="15" fontWeight="500" fontFamily="Roboto, sans-serif">A</text>
        </TB>
        <Caret className="ml-[3px] mr-2" />
        <TB>
          <path d="M2 4h4.500V2.500H8a2.200 2.200 0 0 1 4 0h1.500V4H18v14H2zM6 8v3h1.500V9.800H9V14.500H8V16h4v-1.500h-1V9.800h1.500V11H14V8z" />
        </TB>
        <TB>
          <path d="M12.500 3.500L17 7 8.500 16.500H5.500L3 14v-2.500z" fill="none" stroke="currentColor" strokeWidth="1.300" />
          <path d="M4.500 10.500l5 5L8 17.300H5L2.500 15v-2.500z" />
        </TB>
        <TB d={P.omega} />
        <TB d={P.indentOut} />
        <TB d={P.indentIn} />
        <TB className="text-[#b4b8bb]">
          <path d="M8 1v3.500c6 0 9.500 4.500 8.500 12.500h-2.500c.5-6-2-9-6-9V11L2 6z" />
        </TB>
        <TB className="text-[#b4b8bb]">
          <path d="M12 1v3.500C6 4.500 2.500 9 3.500 17H6c-.5-6 2-9 6-9V11l6-5z" />
        </TB>
        <TB d={P.help} />
        <TB d={P.table} />
        <Caret className="-ml-px" />
      </div>
    </div>
  );
}

const shortcodes = [
  {
    name: "Accordion",
    w: "w-[155px]",
    icon: (
      <svg viewBox="0 0 32 32" className="h-8 w-8" fill="none" stroke="#3bd282" strokeWidth="2">
        <path d="M2 4h28v4H2zM4 12h24v16H4zM11 15.500h10" />
      </svg>
    ),
  },
  {
    name: "List Features",
    w: "w-[171px]",
    icon: (
      <svg viewBox="0 0 32 32" className="h-8 w-8" fill="none" stroke="#fb8350" strokeWidth="2">
        <path d="M10.500 8.500H27M10.500 16H27M10.500 23.500H27M5 8.500h1M5 16h1M5 23.500h1" strokeLinecap="round" />
      </svg>
    ),
  },
  {
    name: "Menu Prices",
    w: "w-[166px]",
    icon: (
      <svg viewBox="0 0 32 32" className="h-8 w-8" fill="none" stroke="#f96c72" strokeWidth="2">
        <path d="M4 10h11V30.500H4zM15 2h12v28.500H15zM8 31v-5h3v5M19 31v-5h4v5" />
        <path d="M7 14h6M7 17.500h6M7 21h6M18 6h7M18 9.500h7M18 13h7M18 16.500h7M18 20h7" strokeWidth="2.200" strokeDasharray="1.600 .9" />
      </svg>
    ),
  },
];

const btn = "flex items-center whitespace-nowrap rounded-[3px] border border-[#ccc] bg-[#f7f7f7] text-[#555] shadow-[0_1px_0_#ccc]";

function EditorColumn() {
  return (
    <div className="flex w-[784px] shrink-0 flex-col">
      <div className="flex h-[38px] shrink-0 items-center border border-[#ddd] bg-white pl-2 pt-0.5 text-[22.100px] text-[#32373c] shadow-[inset_0_1px_2px_rgba(0,0,0,0.07)]">
        pay suraj
      </div>
      <div className="mt-2 flex h-6 items-center whitespace-nowrap pl-2.5 text-[13px] text-[#666]">
        <b className="font-bold">Permalink:</b>
        <a className="ml-[3px] text-[#0073aa] underline">
          https://n2nworld.com/dev2/product/<b>pay-suraj/</b>
        </a>
        <span className={`ml-1 h-6 w-9 justify-center text-[11px] ${btn}`}>Edit</span>
      </div>
      <div className="mt-1.5 flex h-11 w-[280px] shrink-0 items-center rounded-[3px] bg-[#0073aa] pl-3 text-[14px] text-white">
        <svg viewBox="0 0 16 12" className="h-3 w-4" fill="#fff">
          <path d="M4.500 0C6 0 7 .6 7.500 1 9 .3 11 .3 12 1c3 .5 4 2.500 4 4.500S14 9 12.500 9L11 12 9.500 10.500C7 11.500 5.500 10 5 9 2 9 0 7 0 4.500S2 0 4.500 0z" />
        </svg>
        <span className="ml-6 whitespace-nowrap">Backend Editor</span>
        <span className="ml-[26px] whitespace-nowrap">Frontend Editor</span>
      </div>
      <div className="mt-5 flex h-[34px] shrink-0 items-start text-[13px]">
        <span className={`h-7 w-[101px] pl-[7px] ${btn}`}>
          <Dash d={P.media} className="mr-[5px] h-[18px] w-[18px] text-[#82878c]" />
          Add Media
        </span>
        <span className={`ml-[5px] h-7 w-[110px] pl-[7px] ${btn}`}>
          <Dash d={P.popup} className="mr-0.5 h-[18px] w-[18px] text-[#444]" />
          Insert popup
        </span>
        <div className="ml-auto mt-1.5 flex gap-[5px]">
          <span className="z-10 flex h-[29px] w-[53px] items-center justify-center border border-b-0 border-[#e5e5e5] bg-[#f5f5f5] pb-0.5 text-[#555]">Visual</span>
          <span className="flex h-7 w-[43px] items-center justify-center border border-b-0 border-[#e5e5e5] bg-[#ebebeb] pb-px text-[#777]">Text</span>
        </div>
      </div>
      <EditorToolbar />
      <div className="flex h-[75px] shrink-0 gap-[5px] border border-t-0 border-[#e0e0e0] bg-[#f0f5f9] pl-2 pt-2 font-['Liberation_Sans',sans-serif] text-[12px] font-bold text-[#23282d]">
        {shortcodes.map((s) => (
          <span key={s.name} className={`flex h-[59px] border border-[#ddd] bg-white ${s.w}`}>
            <span className="flex w-[58px] items-center justify-center border-r border-[#ddd]">{s.icon}</span>
            <span className="flex flex-1 items-center justify-center whitespace-nowrap pb-0.5">{s.name}</span>
          </span>
        ))}
      </div>
      <div className="flex-1 border-x border-[#e5e5e5] bg-white" />
    </div>
  );
}

function Postbox({ title, className, children }) {
  return (
    <section className={`border border-[#e5e5e5] bg-white shadow-[0_1px_1px_rgba(0,0,0,0.04)] ${className}`}>
      <h2 className="flex h-9 items-center justify-between border-b border-[#eee] pl-3 pr-[13px] text-[14px] font-bold text-[#23282d]">
        {title}
        <Caret up className="mt-[3px] text-[#72777c]" />
      </h2>
      {children}
    </section>
  );
}

const Edit = () => <a className="text-[#0073aa] underline">Edit</a>;

function SideColumn() {
  return (
    <div className="ml-5 w-[280px] shrink-0">
      <Postbox title="QR Code" className="h-[237px]">
        <div className="flex justify-end pr-3 pt-1.5">
          <span className="flex h-[29px] w-[42px] items-center justify-center rounded-[3px] border border-[#006799] bg-[#0085ba] text-white">
            <Dash d={P.update} className="h-[18px] w-[18px]" />
          </span>
        </div>
        <div className="mt-[7px] flex pl-[73px]">
          <QrCode />
        </div>
      </Postbox>
      <Postbox title="Publish" className="mt-5 h-[300px] text-[13px] text-[#444]">
        <div className="flex justify-end pr-2.5 pt-2.5">
          <span className={`h-7 w-[121px] justify-center ${btn}`}>Preview Changes</span>
        </div>
        <div className="px-2.5 leading-5">
          <p className="mt-[11px] flex items-center">
            <Dash d={P.pin} className="mr-[7px] h-[18px] w-[18px] text-[#82878c]" />
            <span>
              Status: <b>Published</b> <Edit />
            </span>
          </p>
          <p className="mt-3.5 flex items-center">
            <Dash d={P.eye} className="mr-[7px] mt-0.5 h-[18px] w-[18px] text-[#82878c]" />
            <span>
              Visibility: <b>Public</b> <Edit />
            </span>
          </p>
          <p className="mt-3.5 flex items-center">
            <Dash d={P.calendar} className="mr-[7px] h-[18px] w-[18px] text-[#82878c]" />
            <span>
              Published on: <b>Apr 12, 2018 @ 07:36</b>
            </span>
          </p>
          <p>
            <Edit />
          </p>
          <p className="mt-[13px] leading-[18px]">
            Catalog visibility: <b>Shop and search results</b>
            <br />
            <Edit />
          </p>
        </div>
      </Postbox>
    </div>
  );
}

function MainArea() {
  const meta = "flex h-[29px] items-center justify-center gap-[7px] whitespace-nowrap border border-t-0 border-[#ddd] bg-white text-[13px] text-[#72777c]";
  return (
    <main className="flex flex-1 flex-col overflow-hidden bg-[#f1f1f1] pl-[22px] pr-5">
      <div className="flex h-[57px] shrink-0 items-start">
        <h1 className="pt-5 text-[23px] leading-7 text-[#23282d]">Edit product</h1>
        <span className="ml-[9px] mt-[21px] flex h-[25px] w-[70px] items-center justify-center rounded-[2px] border border-[#ccc] bg-[#f7f7f7] text-[13px] font-bold text-[#0073aa]">
          Add New
        </span>
        <span className={`ml-auto w-[136px] ${meta}`}>
          Screen Options <Caret />
        </span>
        <span className={`ml-1.5 w-[76px] ${meta}`}>
          Help <Caret />
        </span>
      </div>
      <div className="h-[72px] shrink-0 border-l-4 border-[#dc3232] bg-white pl-3 pt-[18px] text-[13px] leading-[18px] text-[#444] shadow-[0_1px_1px_rgba(0,0,0,0.1)]">
        Free plugin's version is limited to only one open pricing product enabled at a time. You will need to get{" "}
        <a className="text-[#0073aa] underline">Product Open Pricing for WooCommerce Pro</a> to add unlimited number of open
        <br />
        pricing products.
      </div>
      <div className="mt-[25px] flex flex-1">
        <EditorColumn />
        <SideColumn />
      </div>
    </main>
  );
}

function Scrollbar() {
  return (
    <div className="flex w-[15px] shrink-0 flex-col items-center justify-between bg-[#f1f1f1] pb-1.5 pt-1.5">
      <div className="flex flex-col items-center gap-[5px]">
        <Caret up className="h-1 text-[#a3a3a3]" />
        <span className="h-[145px] w-[11px] bg-[#c1c1c1]" />
      </div>
      <Caret className="h-1 text-[#505050]" />
    </div>
  );
}

export default function App() {
  return (
    <div className="flex h-[768px] w-[1366px] flex-col overflow-hidden font-['Roboto',sans-serif]">
      <TopPanel />
      <div className="flex min-h-0 flex-1">
        <Launcher />
        <div className="flex min-w-0 flex-1 flex-col">
          <BrowserChrome />
          <div className="flex min-h-0 flex-1">
            <div className="flex min-w-0 flex-1 flex-col">
              <AdminBar />
              <div className="flex min-h-0 flex-1">
                <AdminMenu />
                <MainArea />
              </div>
            </div>
            <Scrollbar />
          </div>
        </div>
      </div>
    </div>
  );
}
